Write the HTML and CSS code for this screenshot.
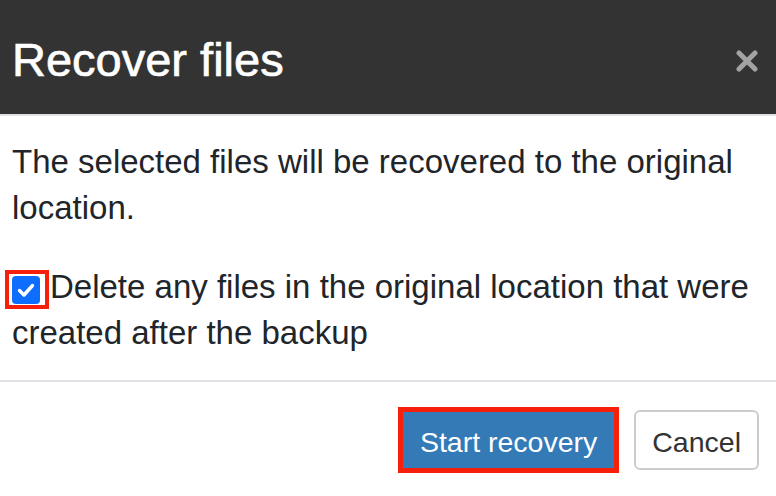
FILE: index.html
```html
<!DOCTYPE html>
<html lang="en">
<head>
    <meta charset="UTF-8">
    <meta name="viewport" content="width=device-width, initial-scale=1.0">
    <title>Recover files</title>
    <link rel="stylesheet" href="styles.css">
</head>
<body>

<div class="modal">
    <div class="modal-header">
        <h2 class="modal-title">Recover files</h2>
        <button type="button" class="close" aria-label="Close">
            <svg width="22" height="22" viewBox="0 0 22 22">
                <path d="M3 3 L19 19 M19 3 L3 19" stroke="#a3a3a3" stroke-width="5" stroke-linecap="round"/>
            </svg>
        </button>
    </div>

    <div class="modal-body">
        <p class="intro">The selected files will be recovered to the original location.</p>
        <label class="option">
            <span class="checkbox marked">
                <svg width="28" height="28" viewBox="0 0 28 28">
                    <path d="M7.5 14.5 L12 19 L20.5 9.5" fill="none" stroke="#fff" stroke-width="3.4" stroke-linecap="round" stroke-linejoin="round"/>
                </svg>
            </span>Delete any files in the original location that were created after the backup
        </label>
    </div>

    <div class="modal-footer">
        <button type="button" class="btn btn-primary marked">Start recovery</button>
        <button type="button" class="btn btn-default">Cancel</button>
    </div>
</div>

</body>
</html>
```

FILE: styles.css
```css
body {
    font-family: "Liberation Sans", Arial, sans-serif;
    background-color: #fff;
    color: #212529;
    margin: 0;
}
.modal {
    width: 776px;
}
.modal-header {
    display: flex;
    justify-content: space-between;
    align-items: flex-start;
    background-color: #333;
    padding: 31px 12px 25px;
    border-bottom: 2px solid #dee2e6;
}
.modal-title {
    margin: 0;
    color: #fff;
    font-size: 47px;
    font-weight: normal;
    line-height: 58px;
    -webkit-text-stroke: 0.7px #fff;
}
.close {
    background: none;
    border: none;
    padding: 0;
    margin: 19px 6px 0 0;
    cursor: pointer;
    line-height: 0;
}
.modal-body {
    padding: 23px 12px 24px;
    font-size: 33px;
    line-height: 46px;
}
.intro {
    margin: 0 0 33px;
}
.option {
    display: block;
}
.checkbox {
    position: relative;
    display: inline-block;
    width: 28px;
    height: 28px;
    margin-right: 10px;
    vertical-align: -6px;
    background-color: #0d6efd;
    border-radius: 4px;
    line-height: 0;
}
/* red highlight frames */
.checkbox.marked::after {
    content: "";
    position: absolute;
    top: -6px;
    right: -9px;
    bottom: -5px;
    left: -7px;
    border: 4px solid #f51f0a;
}
.modal-footer {
    display: flex;
    justify-content: flex-end;
    gap: 18px;
    padding: 28px 17px 26px;
    border-top: 2px solid #dee2e6;
}
.btn {
    height: 60px;
    padding: 4px 16px 0;
    font-family: "Liberation Sans", Arial, sans-serif;
    font-size: 28.5px;
    line-height: 52px;
    border: 2px solid;
    border-radius: 6px;
    cursor: pointer;
}
.btn-primary {
    background-color: #337ab7;
    border-color: #2e6da4;
    color: #fff;
    padding: 4px 17px 0;
}
.btn-primary.marked {
    border-radius: 0;
    outline: 5px solid #f51f0a;
    outline-offset: -2px;
}
.btn-default {
    background-color: #fff;
    border-color: #ccc;
    color: #333;
}
```
